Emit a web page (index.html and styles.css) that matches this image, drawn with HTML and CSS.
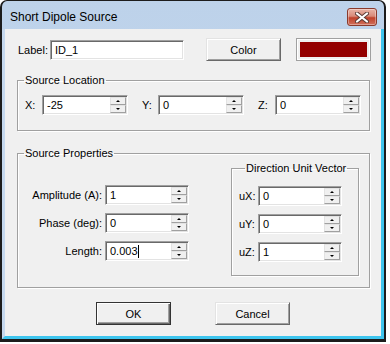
FILE: index.html
```html
<!DOCTYPE html>
<html>
<head>
    <meta charset="UTF-8">
    <title>Short Dipole Source</title>
    <link rel="stylesheet" href="styles.css">
</head>
<body>
    <div class="window">
        <div class="titlebar">
            <span class="title">Short Dipole Source</span>
            <button class="close" type="button">
                <svg width="14" height="11" viewBox="0 0 14 11">
                    <path d="M2 1.5 L12 9.5 M12 1.5 L2 9.5" stroke="#5a3a35" stroke-width="4" stroke-linecap="round"/>
                    <path d="M2 1.5 L12 9.5 M12 1.5 L2 9.5" stroke="#fff" stroke-width="2.2" stroke-linecap="round"/>
                </svg>
            </button>
        </div>

        <div class="client">
            <div class="top-row">
                <span class="lbl name-lbl">Label:</span>
                <div class="textbox name-box"><span class="val">ID_1</span></div>
                <button class="btn color-btn" type="button">Color</button>
                <div class="swatch"><div class="swatch-fill"></div></div>
            </div>

            <fieldset class="group location">
                <legend>Source Location</legend>
                <div class="loc-row">
                    <span class="lbl axis">X:</span>
                    <div class="textbox spin">
                        <span class="val">-25</span>
                        <span class="arrows"><span class="arrow up"></span><span class="arrow down"></span></span>
                    </div>
                    <span class="lbl axis axis-y">Y:</span>
                    <div class="textbox spin">
                        <span class="val">0</span>
                        <span class="arrows"><span class="arrow up"></span><span class="arrow down"></span></span>
                    </div>
                    <span class="lbl axis axis-z">Z:</span>
                    <div class="textbox spin">
                        <span class="val">0</span>
                        <span class="arrows"><span class="arrow up"></span><span class="arrow down"></span></span>
                    </div>
                </div>
            </fieldset>

            <fieldset class="group props">
                <legend>Source Properties</legend>
                <div class="props-body">
                    <div class="prop-grid">
                        <span class="lbl right">Amplitude (A):</span>
                        <div class="textbox spin short">
                            <span class="val">1</span>
                            <span class="arrows"><span class="arrow up"></span><span class="arrow down"></span></span>
                        </div>
                        <span class="lbl right">Phase (deg):</span>
                        <div class="textbox spin short">
                            <span class="val">0</span>
                            <span class="arrows"><span class="arrow up"></span><span class="arrow down"></span></span>
                        </div>
                        <span class="lbl right">Length:</span>
                        <div class="textbox spin short">
                            <span class="val">0.003</span><span class="caret"></span>
                            <span class="arrows"><span class="arrow up"></span><span class="arrow down"></span></span>
                        </div>
                    </div>

                    <fieldset class="group direction">
                        <legend>Direction Unit Vector</legend>
                        <div class="dir-grid">
                            <span class="lbl">uX:</span>
                            <div class="textbox spin short">
                                <span class="val">0</span>
                                <span class="arrows"><span class="arrow up"></span><span class="arrow down"></span></span>
                            </div>
                            <span class="lbl">uY:</span>
                            <div class="textbox spin short">
                                <span class="val">0</span>
                                <span class="arrows"><span class="arrow up"></span><span class="arrow down"></span></span>
                            </div>
                            <span class="lbl">uZ:</span>
                            <div class="textbox spin short">
                                <span class="val">1</span>
                                <span class="arrows"><span class="arrow up"></span><span class="arrow down"></span></span>
                            </div>
                        </div>
                    </fieldset>
                </div>
            </fieldset>

            <div class="actions">
                <button class="btn default" type="button">OK</button>
                <button class="btn" type="button">Cancel</button>
            </div>
        </div>
    </div>
</body>
</html>
```

FILE: styles.css
```css
* {
    box-sizing: border-box;
}

body {
    margin: 0;
    background-color: #fff;
    font-family: 'Liberation Sans', Arial, sans-serif;
    font-size: 11px;
    color: #000;
}

/* marco de la ventana */
.window {
    width: 386px;
    height: 342px;
    border: 1px solid #1c1c1c;
    border-left-width: 2px;
    border-right-width: 2px;
    border-bottom-width: 3px;
    border-radius: 7px 7px 0 0;
    background: linear-gradient(to bottom, #bdd2ea, #c7daef);
    display: flex;
    flex-direction: column;
}

.titlebar {
    height: 28px;
    padding: 4px 7px 0 8px;
    display: flex;
    align-items: center;
    justify-content: space-between;
}

.title {
    font-size: 12px;
}

.close {
    width: 30px;
    height: 18px;
    padding: 0;
    border: 1px solid #8a3a2c;
    border-radius: 3px;
    background: linear-gradient(to bottom, #e8b3a6 0%, #d98a79 45%, #c0412a 55%, #d0705c 100%);
    box-shadow: inset 0 0 0 1px rgba(255, 255, 255, 0.35);
    display: flex;
    align-items: center;
    justify-content: center;
}

.client {
    flex: 1;
    background-color: #f0f0f0;
    border-left: 3px solid #c5d8ee;
    border-right: 3px solid #3ec5ee;
    border-bottom: 3px solid #3ec5ee;
}

.lbl {
    white-space: nowrap;
}

/* fila superior */
.top-row {
    display: flex;
    align-items: center;
    height: 23px;
    margin-top: 9px;
    padding-left: 13px;
}

.name-lbl {
    width: 32px;
}

.textbox {
    height: 20px;
    background-color: #fff;
    border: 1px solid;
    border-color: #a0a0a0 #fff #fff #a0a0a0;
    box-shadow: inset 1px 1px #696969, inset -1px -1px #e3e3e3;
    display: flex;
    align-items: center;
    padding: 1px 1px 1px 4px;
}

.name-box {
    width: 134px;
}

.btn {
    width: 75px;
    height: 23px;
    padding: 0;
    font-family: inherit;
    font-size: 11px;
    color: #000;
    background-color: #f0f0f0;
    border: 1px solid;
    border-color: #e3e3e3 #696969 #696969 #e3e3e3;
    box-shadow: inset 1px 1px #fff, inset -1px -1px #a0a0a0;
}

.color-btn {
    margin-left: 22px;
}

.swatch {
    width: 75px;
    height: 23px;
    margin-left: 15px;
    padding: 3px;
    border: 1px solid #a0a0a0;
    box-shadow: inset 0 0 0 1px #fff;
}

.swatch-fill {
    height: 100%;
    background-color: #940000;
}

/* grupos */
.group {
    margin: 0;
    padding: 0;
    min-width: 0;
    border: 1px solid #a0a0a0;
    box-shadow: inset 1px 1px #fff, 1px 1px #fff;
}

.group legend {
    margin-left: 6px;
    padding: 0 1px;
    line-height: 13px;
}

.location {
    width: 353px;
    margin: 13px 0 0 12px;
    padding: 8px 0 15px 0;
}

.loc-row {
    display: flex;
    align-items: center;
    padding-left: 7px;
}

.axis {
    width: 17px;
}

.axis-y {
    width: 16px;
    margin-left: 14px;
}

.axis-z {
    margin-left: 14px;
}

.spin {
    width: 86px;
    padding-right: 1px;
}

.spin.short {
    width: 84px;
}

.val {
    white-space: nowrap;
}

.caret {
    width: 1px;
    height: 13px;
    background-color: #000;
}

.arrows {
    margin-left: auto;
    width: 16px;
    height: 16px;
    display: flex;
    flex-direction: column;
}

.arrow {
    flex: 1;
    background-color: #f0f0f0;
    border: 1px solid;
    border-color: #e3e3e3 #a0a0a0 #a0a0a0 #e3e3e3;
    display: flex;
    align-items: center;
    justify-content: center;
}

.arrow::after {
    content: "";
    border-left: 2px solid transparent;
    border-right: 2px solid transparent;
}

.arrow.up::after {
    border-bottom: 2px solid #000;
}

.arrow.down::after {
    border-top: 2px solid #000;
}

.props {
    width: 353px;
    margin: 16px 0 0 12px;
    padding: 0 0 11px 0;
}

.props-body {
    display: flex;
    align-items: flex-start;
}

.prop-grid {
    margin-top: 25px;
    display: grid;
    grid-template-columns: 84px 84px;
    column-gap: 3px;
    row-gap: 8px;
    align-items: center;
}

.right {
    text-align: right;
}

.direction {
    width: 128px;
    margin: 2px 0 0 42px;
    padding: 11px 0 13px 7px;
}

.dir-grid {
    display: grid;
    grid-template-columns: 19px 84px;
    row-gap: 8px;
    align-items: center;
}

/* botones inferiores */
.actions {
    display: flex;
    justify-content: center;
    gap: 44px;
    margin-top: 14px;
}

.btn.default {
    border: 1px solid #333;
    box-shadow: inset 1px 1px #fff, inset -1px -1px #696969, inset -2px -2px #a0a0a0;
}
```
